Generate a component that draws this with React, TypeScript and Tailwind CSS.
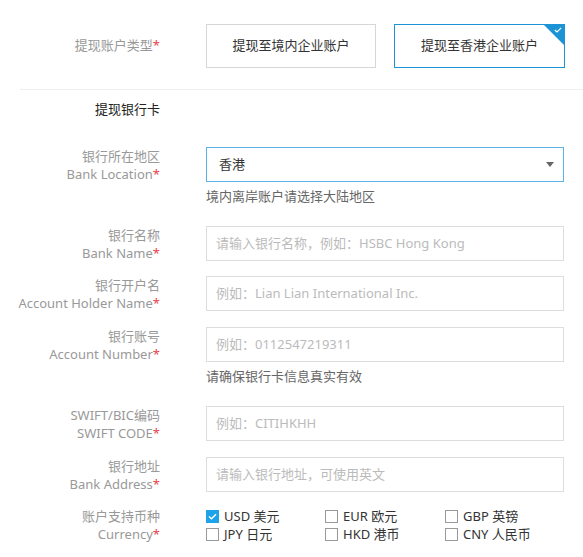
const fields = [
  { cn: "银行名称", en: "Bank Name", ph: "请输入银行名称，例如：HSBC Hong Kong", gap: "mt-5", hint: "" },
  { cn: "银行开户名", en: "Account Holder Name", ph: "例如：Lian Lian International Inc.", gap: "mt-[15px]", hint: "" },
  { cn: "银行账号", en: "Account Number", ph: "例如：0112547219311", gap: "mt-4", hint: "请确保银行卡信息真实有效" },
  { cn: "SWIFT/BIC编码", en: "SWIFT CODE", ph: "例如：CITIHKHH", gap: "mt-5", hint: "" },
  { cn: "银行地址", en: "Bank Address", ph: "请输入银行地址，可使用英文", gap: "mt-4", hint: "" },
];

const currencies = [
  { label: "USD 美元", checked: true },
  { label: "EUR 欧元", checked: false },
  { label: "GBP 英镑", checked: false },
  { label: "JPY 日元", checked: false },
  { label: "HKD 港币", checked: false },
  { label: "CNY 人民币", checked: false },
];

function Star() {
  return <span className="text-[#e8414a]">*</span>;
}

function Label({ cn, en }: { cn: string; en: string }) {
  return (
    <div className="w-[160px] shrink-0 text-right leading-[18px] text-[#999]">
      <div>{cn}</div>
      <div>
        {en}
        <Star />
      </div>
    </div>
  );
}

function Checkbox({ checked }: { checked: boolean }) {
  if (checked) {
    return (
      <span className="flex h-[13px] w-[13px] items-center justify-center bg-[#1ea3ea]">
        <svg width="9" height="7" viewBox="0 0 9 7">
          <path d="M1 3.5 L3.5 5.8 L8 1.2" fill="none" stroke="white" strokeWidth="1.4" />
        </svg>
      </span>
    );
  }
  return <span className="h-[13px] w-[13px] border border-[#999] bg-white" />;
}

export default function App() {
  return (
    <div
      className="w-[583px] bg-white pt-6 text-[13px] text-[#333]"
      style={{ fontFamily: '"Noto Sans", "Noto Sans CJK SC", sans-serif' }}
    >
      <div className="flex items-center">
        <div className="w-[160px] shrink-0 text-right text-[#999]">
          提现账户类型
          <Star />
        </div>
        <div className="ml-[46px] flex gap-[18px]">
          <div className="flex h-[44px] w-[170px] items-center justify-center border border-[#d6d6d6]">
            提现至境内企业账户
          </div>
          <div className="relative flex h-[44px] w-[171px] items-center justify-center overflow-hidden border border-[#1b93d4]">
            提现至香港企业账户
            <div className="absolute right-0 top-0 h-0 w-0 border-l-[20px] border-t-[20px] border-l-transparent border-t-[#1b93d4]" />
            <svg className="absolute right-[2px] top-[2px]" width="8" height="6" viewBox="0 0 8 6">
              <path d="M0.8 3 L3 5 L7.2 0.8" fill="none" stroke="white" strokeWidth="1.2" />
            </svg>
          </div>
        </div>
      </div>

      <div className="ml-5 mt-[21px] h-px bg-[#eeeeee]" />

      <div className="mt-[9px] flex">
        <div className="w-[160px] shrink-0 text-right leading-5 text-[#222]">提现银行卡</div>
      </div>

      <div className="mt-[28px] flex h-[35px] items-center">
        <Label cn="银行所在地区" en="Bank Location" />
        <div className="ml-[46px] flex h-[35px] w-[358px] items-center justify-between border border-[#5ab3e6] pl-3 pr-[9px]">
          <span>香港</span>
          <span className="h-0 w-0 border-x-[4px] border-t-[5px] border-x-transparent border-t-[#666]" />
        </div>
      </div>
      <div className="ml-[206px] mt-1 leading-5 text-[#666]">境内离岸账户请选择大陆地区</div>

      {fields.map((f) => (
        <div key={f.en}>
          <div className={`${f.gap} flex h-[35px] items-center`}>
            <Label cn={f.cn} en={f.en} />
            <div className="ml-[46px] flex h-[35px] w-[358px] items-center border border-[#dddddd] pl-[9px] text-[#bbb]">
              {f.ph}
            </div>
          </div>
          {f.hint && <div className="ml-[206px] mt-1 leading-5 text-[#666]">{f.hint}</div>}
        </div>
      ))}

      <div className="mt-[15px] flex">
        <Label cn="账户支持币种" en="Currency" />
        <div className="ml-[46px] grid w-[358px] grid-cols-[119px_120px_1fr] leading-[18px]">
          {currencies.map((c) => (
            <div key={c.label} className="flex items-center gap-[5px]">
              <Checkbox checked={c.checked} />
              <span className="text-[#333]">{c.label}</span>
            </div>
          ))}
        </div>
      </div>
    </div>
  );
}
